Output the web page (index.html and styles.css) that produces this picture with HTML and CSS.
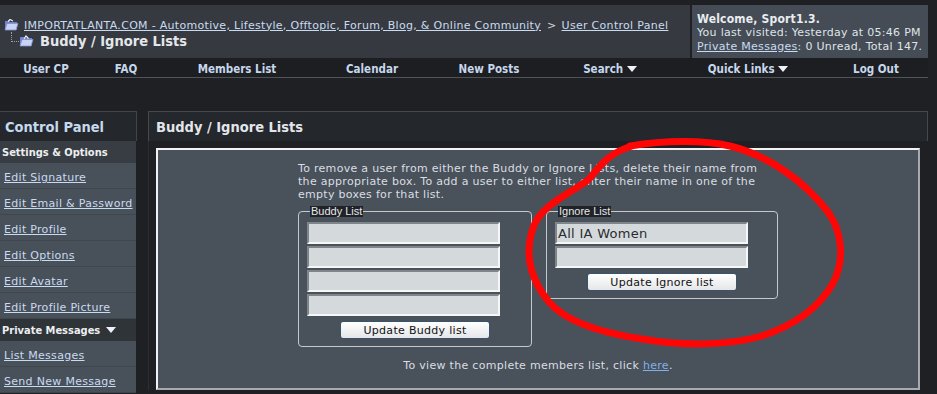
FILE: index.html
```html
<!DOCTYPE html>
<html lang="en">
<head>
  <meta charset="UTF-8">
  <title>Buddy / Ignore Lists - IMPORTATLANTA.COM</title>
  <link rel="stylesheet" href="styles.css">
</head>
<body>
  <div class="page">
    <!-- Cabecera: migas de pan + bienvenida -->
    <div class="top">
      <div class="crumbs">
        <div class="crumb-line">
          <svg class="folder" width="15" height="12" viewBox="0 0 15 12">
            <path d="M1 2h4l1 1h7v8H1z" fill="#6f84c9"/>
            <path d="M3 4.5h11l-2 6.5H1z" fill="#c9d4f4" stroke="#7d8fd0" stroke-width="0.8"/>
            <path d="M4 2.5l2 -2 3 1.5" stroke="#eef2ff" stroke-width="1.2" fill="none"/>
          </svg>
          <a href="#">IMPORTATLANTA.COM - Automotive, Lifestyle, Offtopic, Forum, Blog, &amp; Online Community</a>
          <span class="sep">&gt;</span>
          <a href="#">User Control Panel</a>
        </div>
        <div class="crumb-current">
          <span class="tree"></span>
          <svg class="folder" width="15" height="12" viewBox="0 0 15 12">
            <path d="M1 2h4l1 1h7v8H1z" fill="#6f84c9"/>
            <path d="M3 4.5h11l-2 6.5H1z" fill="#c9d4f4" stroke="#7d8fd0" stroke-width="0.8"/>
            <path d="M5 4l2 -3 2.5 2.5" stroke="#eef2ff" stroke-width="1.2" fill="none"/>
          </svg>
          <strong>Buddy / Ignore Lists</strong>
        </div>
      </div>
      <div class="welcome">
        <strong>Welcome, Sport1.3.</strong>
        <div>You last visited: Yesterday at 05:46 PM</div>
        <div><a href="#">Private Messages</a>: 0 Unread, Total 147.</div>
      </div>
    </div>

    <nav class="navbar">
      <a href="#">User CP</a>
      <a href="#">FAQ</a>
      <a href="#">Members List</a>
      <a href="#">Calendar</a>
      <a href="#">New Posts</a>
      <a href="#">Search <span class="arrow"></span></a>
      <a href="#">Quick Links <span class="arrow"></span></a>
      <a href="#">Log Out</a>
    </nav>

    <div class="layout">
      <!-- Menú lateral -->
      <aside class="sidebar">
        <div class="side-title">Control Panel</div>
        <div class="side-group">Settings &amp; Options</div>
        <a class="side-link" href="#">Edit Signature</a>
        <a class="side-link" href="#">Edit Email &amp; Password</a>
        <a class="side-link" href="#">Edit Profile</a>
        <a class="side-link" href="#">Edit Options</a>
        <a class="side-link" href="#">Edit Avatar</a>
        <a class="side-link" href="#">Edit Profile Picture</a>
        <div class="side-group dark">Private Messages <span class="arrow"></span></div>
        <a class="side-link" href="#">List Messages</a>
        <a class="side-link" href="#">Send New Message</a>
      </aside>

      <!-- Panel principal -->
      <main class="panel">
        <h2 class="panel-head">Buddy / Ignore Lists</h2>
        <div class="panel-wrap">
          <div class="panel-body">
            <div class="lists">
              <p class="intro">To remove a user from either the Buddy or Ignore Lists, delete their name from the appropriate box. To add a user to either list, enter their name in one of the empty boxes for that list.</p>
              <div class="list-row">
                <fieldset class="buddy">
                  <legend>Buddy List</legend>
                  <input type="text">
                  <input type="text">
                  <input type="text">
                  <input type="text">
                  <button type="button">Update Buddy list</button>
                </fieldset>
                <fieldset class="ignore">
                  <legend>Ignore List</legend>
                  <input type="text" value="All IA Women">
                  <input type="text">
                  <button type="button">Update Ignore list</button>
                </fieldset>
              </div>
            </div>
            <p class="note">To view the complete members list, click <a href="#">here</a>.</p>
          </div>
        </div>
      </main>
    </div>

    <!-- Círculo rojo dibujado a mano -->
    <svg class="scribble" width="937" height="394" viewBox="0 0 937 394">
      <path d="M630 146 C665 140 705 140 730 146 C770 156 805 182 828 212 C843 233 845 262 832 285 C817 310 792 326 762 336 C727 346 682 346 642 339 C602 333 566 322 549 302 C531 280 524 255 533 228 C541 205 568 195 588 180 C598 170 605 154 632 146"
            fill="none" stroke="#ff0606" stroke-width="7" stroke-linecap="round" stroke-linejoin="round"/>
    </svg>
  </div>
</body>
</html>
```

FILE: styles.css
```css
:root {
  --page-bg: #1e2023;
  --head-bg: #363a40;
  --welcome-bg: #454c55;
  --bar-bg: #24272b;
  --row-bg: #48505a;
  --box-bg: #49515a;
  --link: #c9dbf0;
  --text: #dde2e7;
  --bold-font: "DejaVu Sans Condensed", "DejaVu Sans", Tahoma, sans-serif;
}

* {
  box-sizing: border-box;
}

body {
  margin: 0;
  background: var(--page-bg);
  font-family: "DejaVu Sans", Verdana, sans-serif;
  font-size: 11px;
  letter-spacing: 0.3px;
  color: var(--text);
}

a {
  color: var(--link);
}

.page {
  position: relative;
  width: 937px;
  height: 394px;
  overflow: hidden;
}

/* Cabecera */
.top {
  display: flex;
  gap: 2px;
  width: 928px;
  height: 53px;
  margin-top: 5px;
}

.crumbs {
  width: 690px;
  background: var(--head-bg);
  padding: 13px 0 0 4px;
}

.crumb-line {
  display: flex;
  align-items: center;
  gap: 5px;
  height: 14px;
}

.crumb-line .sep {
  margin-left: 1px;
  color: #d0d6dc;
}

.crumb-current {
  display: flex;
  align-items: center;
  height: 18px;
}

.crumb-current strong {
  font-family: var(--bold-font);
  font-size: 14.5px;
  letter-spacing: 0;
  color: #e3e7eb;
  margin-left: 6px;
}

.tree {
  width: 8px;
  height: 10px;
  margin: -8px 0 0 7px;
  border-left: 1px dotted #9aa0a8;
  border-bottom: 1px dotted #9aa0a8;
}

.welcome {
  flex: 1;
  background: var(--welcome-bg);
  padding: 7px 0 0 5px;
  line-height: 14px;
  color: #dfe4ea;
}

.welcome strong {
  display: block;
  font-family: var(--bold-font);
  font-size: 12px;
  letter-spacing: 0.2px;
  color: #e9edf1;
}

/* Barra de navegación */
.navbar {
  display: grid;
  grid-template-columns: 92px 68px 154px 116px 118px 124px 152px 104px;
  width: 928px;
  height: 20px;
  padding-top: 2px;
  background: #1c1e21;
  border-bottom: 1px solid #505459;
  align-items: center;
}

.navbar a {
  justify-self: center;
  font-family: var(--bold-font);
  font-size: 11.5px;
  font-weight: bold;
  letter-spacing: 0;
  text-decoration: none;
  color: #c6d7ec;
}

.arrow {
  display: inline-block;
  width: 0;
  height: 0;
  border-left: 5px solid transparent;
  border-right: 5px solid transparent;
  border-top: 6px solid #eef2f8;
  vertical-align: 1px;
}

/* Layout principal */
.layout {
  display: flex;
  gap: 11px;
  width: 928px;
  margin-top: 33px;
}

.sidebar {
  width: 137px;
  display: flex;
  flex-direction: column;
}

.side-title {
  height: 30px;
  padding: 7px 0 0 5px;
  background: var(--bar-bg);
  border-top: 1px solid #41454a;
  border-right: 1px solid #41454a;
  font-family: var(--bold-font);
  font-size: 14.5px;
  font-weight: bold;
  letter-spacing: 0;
  color: #c5d9ef;
}

.side-group {
  height: 22px;
  padding: 5px 0 0 2px;
  width: 136px;
  background: #383d43;
  font-family: var(--bold-font);
  font-size: 11px;
  font-weight: bold;
  letter-spacing: 0;
  color: #eceef0;
}

.side-group.dark {
  height: 22px;
  background: #2f3439;
}

.side-group .arrow {
  margin-left: 2px;
}

.side-link {
  display: block;
  width: 136px;
  height: 26px;
  padding: 8px 0 0 4px;
  background: var(--row-bg);
  border-bottom: 1px solid #3f464e;
}

.panel {
  width: 780px;
}

.panel-head {
  margin: 0;
  height: 30px;
  padding: 7px 0 0 7px;
  background: var(--bar-bg);
  border: 1px solid #45494e;
  border-bottom: none;
  font-family: var(--bold-font);
  font-size: 14.5px;
  letter-spacing: 0;
  color: #e2e6ea;
}

.panel-wrap {
  padding: 7px 8px 0 7px;
  border-left: 1px solid #2b2e32;
}

.panel-body {
  height: 242px;
  background: var(--box-bg);
  border: 2px solid #f2f2f2;
  border-right-color: #a7abb0;
  border-bottom-color: #a7abb0;
  padding-top: 12px;
}

.lists {
  width: 480px;
  margin: 0 auto;
}

.intro {
  margin: 0;
  line-height: 13px;
  color: #d9dee3;
}

.list-row {
  display: flex;
  gap: 14px;
  align-items: flex-start;
  margin-top: 5px;
}

fieldset {
  margin: 0;
  padding: 5px 8px 7px;
  border: 1px solid #c4c9ce;
  border-radius: 4px;
  display: flex;
  flex-direction: column;
  gap: 2px;
}

fieldset.buddy {
  width: 234px;
}

fieldset.ignore {
  width: 232px;
}

legend {
  margin-left: 3px;
  padding: 0 1px;
  font-family: "Liberation Sans", Arial, sans-serif;
  font-size: 11px;
  line-height: 11px;
  letter-spacing: 0;
  background: #1f2226;
  color: #e6e8ea;
}

input {
  width: 193px;
  height: 22px;
  margin: 0;
  padding: 1px 1px 0;
  background: #d4d9dc;
  border: 2px solid;
  border-color: #80858a #f4f6f7 #f4f6f7 #80858a;
  font-family: "DejaVu Sans", Verdana, sans-serif;
  font-size: 13px;
  letter-spacing: 0.3px;
  color: #2a2c2e;
}

button {
  align-self: center;
  width: 150px;
  height: 18px;
  margin-top: 3px;
  padding: 0;
  background: linear-gradient(#ffffff, #e4e6e8);
  border: 1px solid #37536f;
  border-radius: 3px;
  font-family: "DejaVu Sans", Verdana, sans-serif;
  font-size: 11px;
  letter-spacing: 0.3px;
  color: #111;
}

.note {
  margin: 12px 0 0;
  text-align: center;
  color: #d9dee3;
}

.note a {
  color: #7fb0ee;
}

.scribble {
  position: absolute;
  top: 0;
  left: 0;
  pointer-events: none;
}
```
